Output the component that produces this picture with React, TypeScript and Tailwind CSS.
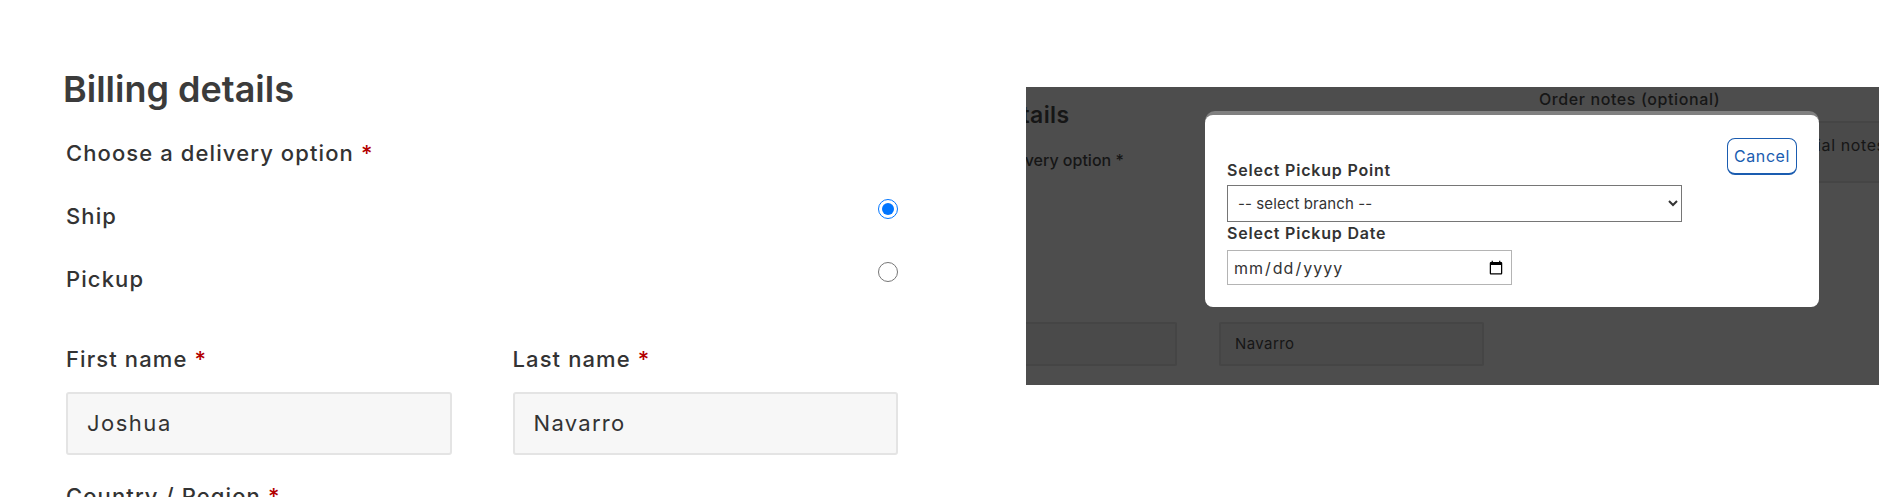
import React from 'react';

const font = { fontFamily: 'Inter, "Noto Sans", sans-serif' };

function Req() {
  return <span className="text-[#b30000]"> *</span>;
}

function BillingForm() {
  return (
    <div className="w-[1026px] shrink-0 pl-[66px] pr-[128px] pt-[69px] text-[#333]">
      <h2 className="-ml-[3px] text-[36px] leading-[40px] font-semibold text-[#3b3b3b]">Billing details</h2>

      <p className="mt-[30px] text-[22px] leading-[28px] font-medium tracking-[1.1px]">
        Choose a delivery option
        <Req />
      </p>

      {/* delivery options */}
      <div className="mt-[32px] flex flex-col gap-[32px]">
        <label className="flex items-start justify-between">
          <span className="mt-[3px] text-[22px] leading-[28px] font-medium tracking-[1.1px]">Ship</span>
          <input type="radio" name="delivery" defaultChecked className="w-5 h-5 m-0" />
        </label>
        <label className="flex items-start justify-between">
          <span className="mt-[3px] text-[22px] leading-[28px] font-medium tracking-[1.1px]">Pickup</span>
          <input type="radio" name="delivery" className="w-5 h-5 m-0" />
        </label>
      </div>

      <div className="mt-[52px] grid grid-cols-2 gap-x-[61px]">
        <div>
          <p className="text-[22px] leading-[28px] font-medium tracking-[1.1px]">
            First name
            <Req />
          </p>
          <div className="mt-[19px] h-[63px] flex items-center px-[19px] bg-[#f7f7f7] border-2 border-[#e4e4e4] rounded-[3px] text-[22px] tracking-[1.5px]">
            Joshua
          </div>
        </div>
        <div>
          <p className="text-[22px] leading-[28px] font-medium tracking-[1.1px]">
            Last name
            <Req />
          </p>
          <div className="mt-[19px] h-[63px] flex items-center px-[19px] bg-[#f7f7f7] border-2 border-[#e4e4e4] rounded-[3px] text-[22px] tracking-[1.3px]">
            Navarro
          </div>
        </div>
      </div>

      <p className="mt-[27px] text-[22px] leading-[28px] font-medium tracking-[1.1px]">
        Country / Region
        <Req />
      </p>
    </div>
  );
}

function PickupModal() {
  return (
    <div className="absolute left-[179px] top-[24px] w-[614px] rounded-[10px] bg-[linear-gradient(#808080_0_10px,transparent_10px)] pt-[4px]">
      <div className="h-[192px] rounded-[8px] bg-white px-[22px] pt-[23px] flex justify-between items-start">
        <div className="pt-[22px] text-[#333]">
          <p className="text-[16px] leading-[20px] font-semibold tracking-[0.8px]">Select Pickup Point</p>
          <select className="mt-[5px] block w-[455px] h-[37px] border border-[#767676] px-[6px] text-[15px] tracking-[0.1px] bg-white text-[#333]">
            <option>-- select branch --</option>
          </select>
          <p className="mt-[1px] text-[16px] leading-[20px] font-semibold tracking-[0.8px]">Select Pickup Date</p>
          <input
            type="date"
            className="mt-[7px] block w-[285px] h-[35px] border border-[#b4b4b4] px-[5px] text-[16px] tracking-[1px] bg-white"
          />
        </div>
        <button className="w-[70px] h-[37px] rounded-[8px] border border-b-2 border-[#1a5cb0] text-[#1a5cb0] text-[16px] tracking-[0.6px] bg-white">
          Cancel
        </button>
      </div>
    </div>
  );
}

function DimmedCheckout() {
  return (
    <div className="relative w-[853px] h-[298px] mt-[87px] overflow-hidden bg-[#4d4d4d] text-[#161616]">
      <div className="flex -ml-[114px]">
        <div className="w-[572px] shrink-0 pt-[14px]">
          <h2 className="pl-[4px] text-[23px] leading-[28px] font-semibold tracking-[0.4px]">Billing details</h2>
          <p className="mt-[21px] ml-[9px] text-[16px] leading-[20px] font-medium">
            Choose a delivery option <span>*</span>
          </p>
          <div className="mt-[122px] grid grid-cols-2 gap-x-[42px]">
            <div>
              <p className="text-[15px] leading-[20px] font-medium">First name *</p>
              <div className="mt-[10px] h-[44px] border-2 border-[#454545] bg-[#4a4a4a] rounded-[2px] px-[14px] flex items-center text-[15px]">
                Joshua
              </div>
            </div>
            <div>
              <p className="text-[15px] leading-[20px] font-medium">Last name *</p>
              <div className="mt-[10px] h-[44px] border-2 border-[#454545] bg-[#4a4a4a] rounded-[2px] px-[14px] flex items-center text-[15px] tracking-[0.4px]">
                Navarro
              </div>
            </div>
          </div>
        </div>
        <div className="ml-[55px] w-[400px] shrink-0 pt-[2px]">
          <p className="text-[16px] leading-[20px] font-medium tracking-[0.6px]">Order notes (optional)</p>
          <div className="mt-[12px] h-[62px] border-2 border-[#454545] bg-[#4a4a4a] rounded-[2px] pl-[237px] pt-[10px] text-[16px] tracking-[0.6px] whitespace-nowrap">
            special notes for delivery.
          </div>
        </div>
      </div>
      <PickupModal />
    </div>
  );
}

export default function App() {
  return (
    <div className="w-[1880px] h-[497px] overflow-hidden bg-white flex" style={font}>
      <BillingForm />
      <DimmedCheckout />
    </div>
  );
}
